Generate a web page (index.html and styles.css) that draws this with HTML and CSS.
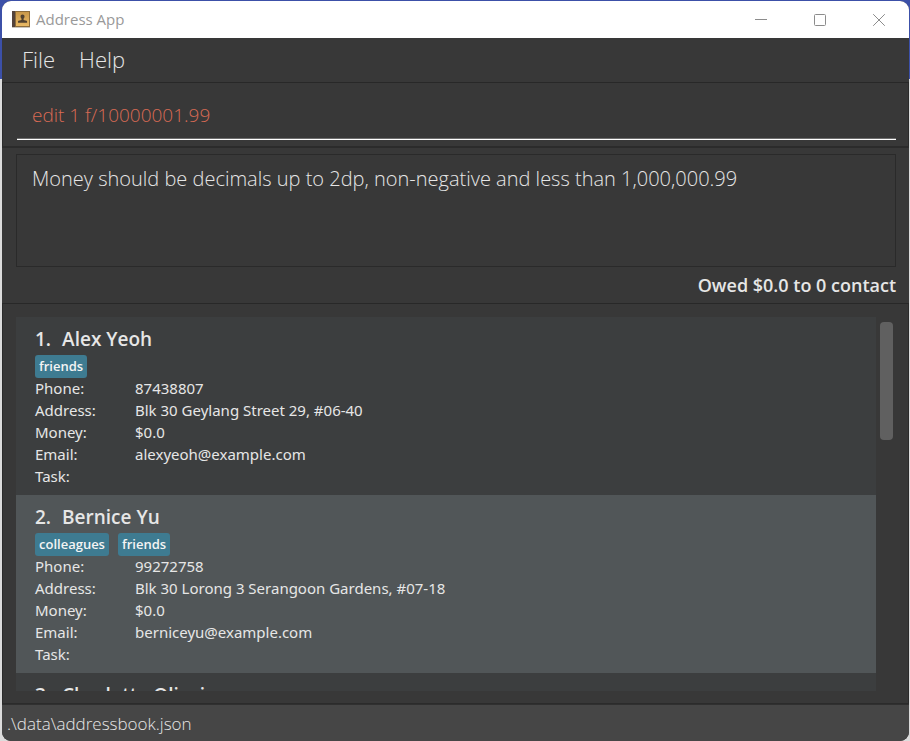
FILE: index.html
```html
<!DOCTYPE html>
<html lang="en">
<head>
<meta charset="utf-8">
<title>Address App</title>
<link rel="stylesheet" href="styles.css">
</head>
<body>
<div class="window">
  <header class="titlebar">
    <svg class="app-icon" width="18" height="17" viewBox="0 0 18 17" aria-hidden="true">
      <defs><linearGradient id="cover" x1="0" y1="0" x2="0" y2="1"><stop offset="0" stop-color="#c99849"/><stop offset="1" stop-color="#e9b964"/></linearGradient></defs>
      <rect x="0" y="0" width="18" height="16" fill="#8d6c3a"/>
      <rect x="4" y="1" width="13" height="14" fill="url(#cover)"/>
      <rect x="0" y="0" width="3" height="16" fill="#54433a"/>
      <rect x="0" y="16" width="18" height="1" fill="#c9c4bc"/>
      <path d="M10.500 3.500c1.500 0 2.200 1 2 2.300-.1 1-.6 1.500-.9 2v1.200l3 .8c.4.100.5.400.5 1v1H6v-1c0-.6.1-.9.5-1l3-.8V7.800c-.3-.5-.8-1-.9-2-.2-1.300.4-2.300 1.900-2.300z" fill="#51412f"/>
    </svg>
    <h1 class="title">Address App</h1>
    <div class="window-buttons">
      <button type="button" aria-label="Minimize"><svg width="14" height="14" viewBox="0 0 14 14"><path d="M1 6.500h12"/></svg></button>
      <button type="button" aria-label="Maximize"><svg width="14" height="14" viewBox="0 0 14 14"><rect x="1.500" y="1.500" width="11" height="11" rx="1"/></svg></button>
      <button type="button" aria-label="Close"><svg width="14" height="14" viewBox="0 0 14 14"><path d="M1.200 1.200l11.600 11.600M12.800 1.200L1.200 12.800"/></svg></button>
    </div>
  </header>
  <nav class="menubar">
    <button type="button">File</button>
    <button type="button">Help</button>
  </nav>
  <form class="command">
    <input type="text" aria-label="Command" value="edit 1 f/10000001.99" spellcheck="false">
  </form>
  <section class="result">
    <output class="message">Money should be decimals up to 2dp, non-negative and less than 1,000,000.99</output>
    <p class="owed">Owed $0.0 to 0 contact</p>
  </section>
  <main class="contacts">
    <ol class="list">
      <li class="card">
        <h2><span>1.</span><span>Alex Yeoh</span></h2>
        <div class="tags"><span>friends</span></div>
        <dl>
          <dt>Phone:</dt><dd>87438807</dd>
          <dt>Address:</dt><dd>Blk 30 Geylang Street 29, #06-40</dd>
          <dt>Money:</dt><dd>$0.0</dd>
          <dt>Email:</dt><dd>alexyeoh@example.com</dd>
          <dt>Task:</dt><dd></dd>
        </dl>
      </li>
      <li class="card">
        <h2><span>2.</span><span>Bernice Yu</span></h2>
        <div class="tags"><span>colleagues</span><span>friends</span></div>
        <dl>
          <dt>Phone:</dt><dd>99272758</dd>
          <dt>Address:</dt><dd>Blk 30 Lorong 3 Serangoon Gardens, #07-18</dd>
          <dt>Money:</dt><dd>$0.0</dd>
          <dt>Email:</dt><dd>berniceyu@example.com</dd>
          <dt>Task:</dt><dd></dd>
        </dl>
      </li>
      <li class="card">
        <h2><span>3.</span><span>Charlotte Oliveiro</span></h2>
      </li>
    </ol>
    <div class="scrollbar"><div class="thumb"></div></div>
  </main>
  <footer class="status">.\data\addressbook.json</footer>
</div>
</body>
</html>
```
FILE: styles.css
```css
* { box-sizing: border-box; }

body {
  margin: 0;
  height: 100vh;
  padding: 1px 1px 0 2px;
  background: linear-gradient(#3c50a8 79px, #dcdcdc 79px);
  color: #e6e6e6;
  font-family: "Open Sans", "Noto Sans", sans-serif;
}

h1, h2, p, dl, dd, ol { margin: 0; padding: 0; }

button {
  border: 0;
  padding: 0;
  background: none;
  color: inherit;
  font: inherit;
}

.window {
  display: flex;
  flex-direction: column;
  height: 100%;
  overflow: hidden;
  border-radius: 9px;
  background: #383838;
}

.titlebar {
  display: flex;
  align-items: center;
  flex: none;
  height: 37px;
  padding: 0 1px 0 10px;
  background: #fff;
}

.title {
  margin-left: 6px;
  color: #999;
  font-size: 15px;
  font-weight: 400;
  line-height: 20px;
  padding-bottom: 2px;
}

.window-buttons { display: flex; margin-left: auto; }

.window-buttons button {
  display: grid;
  place-items: center;
  width: 59px;
  height: 36px;
}

.window-buttons svg {
  fill: none;
  stroke: #8c8c8c;
}

.menubar {
  display: flex;
  flex: none;
  gap: 24px;
  height: 45px;
  padding: 0 20px 2px;
  border-bottom: 1px solid #282828;
  font-size: 22px;
  font-weight: 300;
}

.command {
  flex: none;
  height: 65px;
  padding: 10px 12px 0 14px;
  border: solid #2b2b2b;
  border-width: 0 1px 2px;
}

.command input {
  display: block;
  width: 100%;
  height: 47px;
  padding: 0 15px 2px;
  border: 0;
  border-bottom: 1px solid #fff;
  box-shadow: inset 0 -1px #6e6e6e;
  outline: 0;
  background: none;
  color: #d96a54;
  font-family: inherit;
  font-size: 19px;
  font-weight: 300;
}

.result {
  flex: none;
  padding: 6px 13px 0 14px;
  border-bottom: 1px solid #282828;
}

.message {
  display: block;
  height: 113px;
  padding: 9px 15px;
  border: 1px solid #2a2a2a;
  font-size: 20px;
  font-weight: 300;
  line-height: 30px;
}

.owed {
  height: 36px;
  font-size: 18px;
  font-weight: 600;
  line-height: 37px;
  text-align: right;
}

.contacts {
  display: flex;
  flex: 1;
  min-height: 0;
  padding: 13px 15px 12px 13px;
  border: solid #2b2b2b;
  border-width: 0 1px 1px;
}

.list {
  flex: 1;
  overflow: hidden;
  list-style: none;
}

.card {
  height: 178px;
  padding: 8px 19px;
  background: #3c3e3f;
}

.card:nth-child(even) { background: #515658; }

.card h2 {
  display: flex;
  gap: 11px;
  font-size: 19px;
  font-weight: 600;
  line-height: 28px;
}

.tags {
  display: flex;
  gap: 9px;
  padding-top: 2px;
}

.tags span {
  padding: 0 4px;
  border-radius: 3px;
  background: #3e7b91;
  color: #f4f4f4;
  font-size: 13px;
  font-weight: 600;
  line-height: 23px;
}

.card dl {
  display: grid;
  grid-template-columns: 100px 1fr;
  grid-auto-rows: 22px;
  font-family: "Noto Sans", "Open Sans", sans-serif;
  font-size: 15px;
  line-height: 20px;
}

.scrollbar {
  width: 17px;
  padding: 5px 0 0 4px;
}

.thumb {
  height: 118px;
  border-radius: 4px;
  background: #606060;
}

.status {
  flex: none;
  height: 37px;
  padding: 0 5px;
  border-top: 1px solid #303030;
  background: #464646;
  font-size: 17px;
  font-weight: 300;
  line-height: 37px;
}
```
